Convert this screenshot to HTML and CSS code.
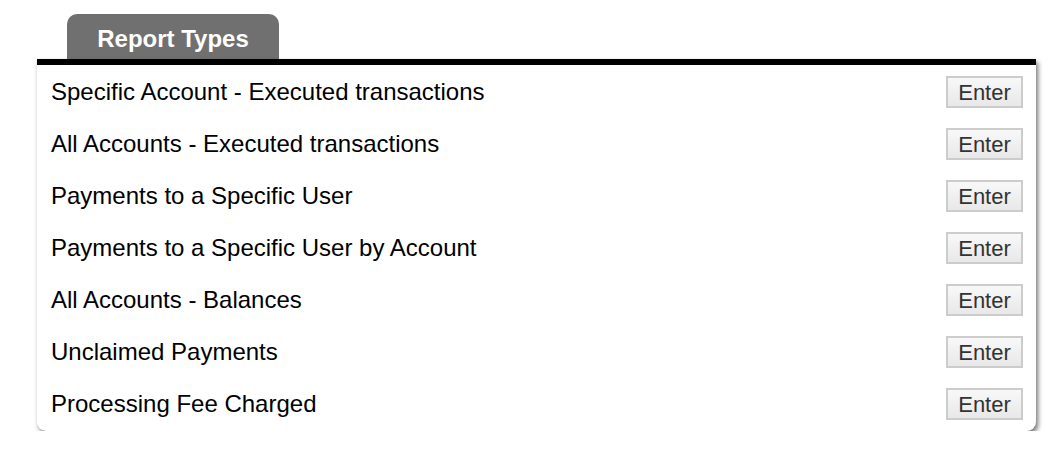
FILE: index.html
```html
<!DOCTYPE html>
<html>
<head>
<meta charset="utf-8">
<link rel="stylesheet" href="styles.css">
</head>
<body>
<div class="page">
  <div class="tab">Report Types</div>
  <div class="panel">
    <div class="row"><span class="label">Specific Account - Executed transactions</span><button class="btn">Enter</button></div>
    <div class="row"><span class="label">All Accounts - Executed transactions</span><button class="btn">Enter</button></div>
    <div class="row"><span class="label">Payments to a Specific User</span><button class="btn">Enter</button></div>
    <div class="row"><span class="label">Payments to a Specific User by Account</span><button class="btn">Enter</button></div>
    <div class="row"><span class="label">All Accounts - Balances</span><button class="btn">Enter</button></div>
    <div class="row"><span class="label">Unclaimed Payments</span><button class="btn">Enter</button></div>
    <div class="row"><span class="label">Processing Fee Charged</span><button class="btn">Enter</button></div>
  </div>
</div>
</body>
</html>
```
FILE: styles.css
```css
html, body {
  margin: 0;
  padding: 0;
  background: #ffffff;
}
.page {
  padding: 14px 0 0 37px;
  font-family: "Liberation Sans", Arial, sans-serif;
}
.tab {
  margin-left: 30px;
  width: 212px;
  height: 45px;
  background: #707070;
  color: #ffffff;
  border-radius: 10px 10px 0 0;
  font-weight: bold;
  font-size: 24px;
  display: flex;
  align-items: center;
  justify-content: center;
  box-sizing: border-box;
  padding-top: 4px;
}
.panel {
  width: 999px;
  box-sizing: border-box;
  border-top: 6px solid #000000;
  border-radius: 0 0 9px 9px;
  box-shadow: 2px 3px 5px rgba(0, 0, 0, 0.55);
  padding-bottom: 2px;
  background: #ffffff;
}
.row {
  height: 52px;
  display: flex;
  align-items: center;
  justify-content: space-between;
  padding: 0 13px 0 14px;
}
.label {
  font-size: 24px;
  color: #000000;
  margin-top: 1px;
}
.btn {
  font-family: "Liberation Sans", Arial, sans-serif;
  font-size: 22px;
  color: #333333;
  width: 77px;
  height: 32px;
  border: 2px solid #cccccc;
  background: linear-gradient(#f8f8f8, #e8e8e8);
  border-radius: 0;
  padding: 2px 0 0 0;
  margin-top: 2px;
}
```
